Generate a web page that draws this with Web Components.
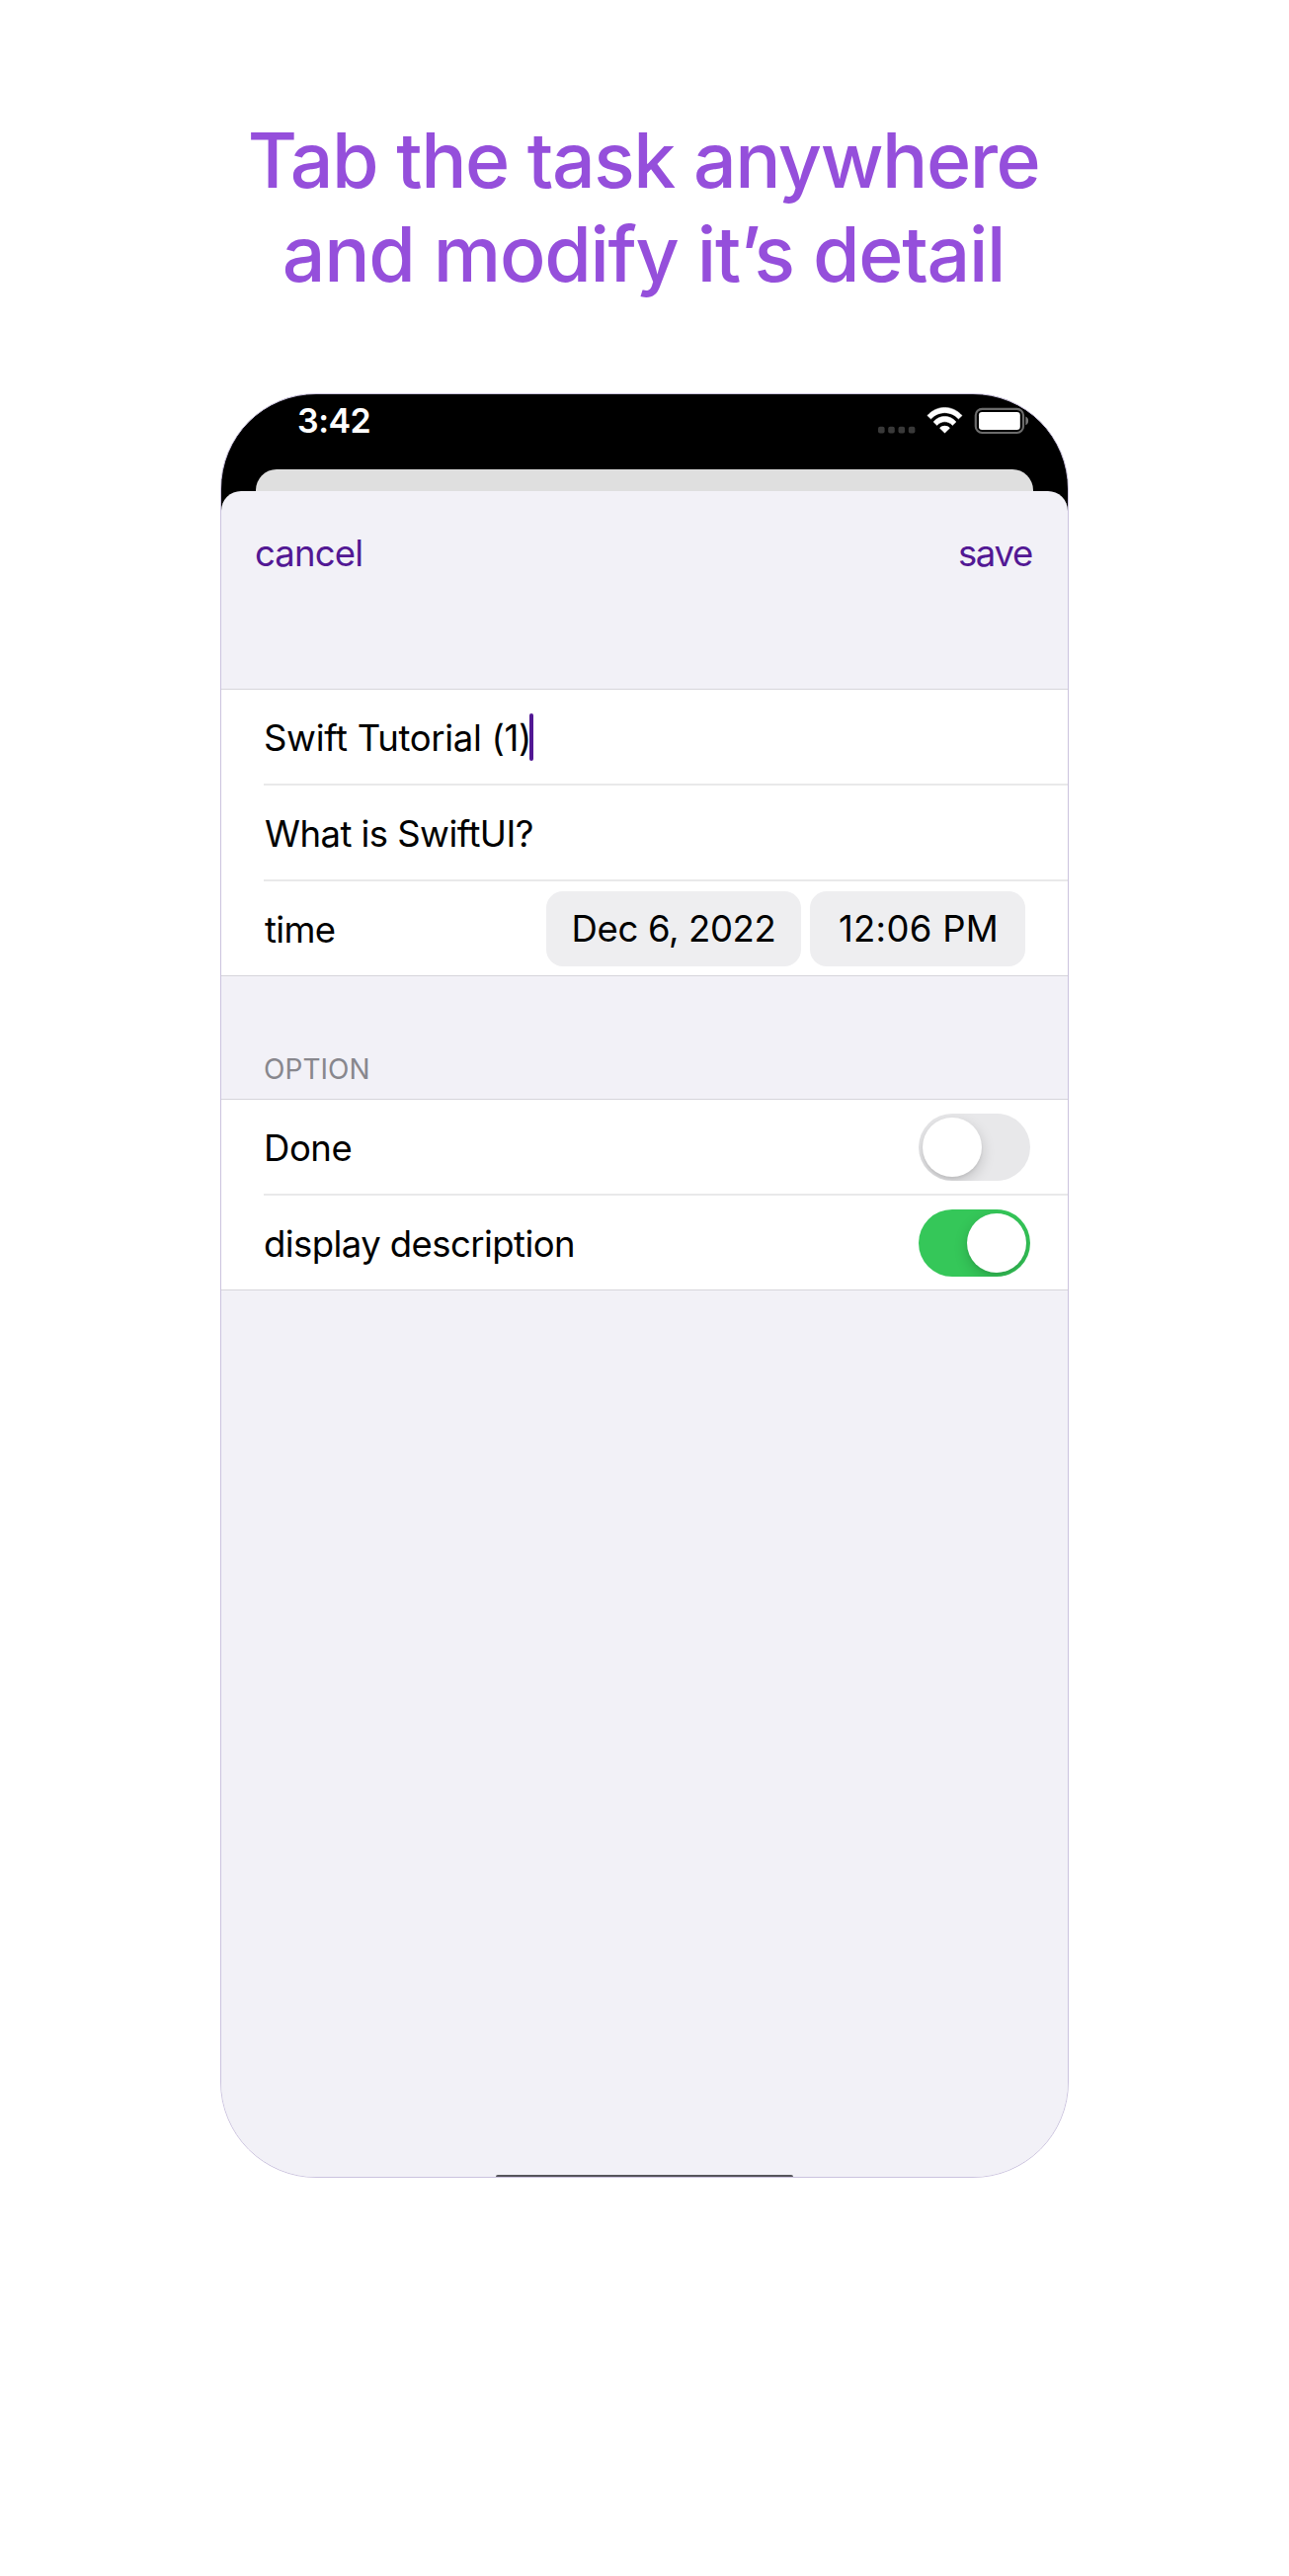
<!DOCTYPE html>
<html lang="en">
<head>
<meta charset="utf-8">
<title>Task detail</title>
<style>
html,body{margin:0;background:#fff}
body{font-family:Inter,"Noto Sans",sans-serif;color:#000;-webkit-font-smoothing:antialiased}
</style>
</head>
<body>
<promo-page>
  <promo-title slot="title"></promo-title>
  <phone-frame>
    <status-bar slot="status" time="3:42"></status-bar>
    <sheet-nav></sheet-nav>
    <form-section>
      <form-row ls="-0.319" left="0">Swift Tutorial (1)<text-caret slot="caret"></text-caret></form-row>
      <form-row ls="-0.55" left="1">What is SwiftUI?</form-row>
      <form-row ls="-0.7" left="1">time
        <date-chip slot="control" style="width:258px;letter-spacing:-.35px">Dec 6, 2022</date-chip>
        <date-chip slot="control" style="width:218px;letter-spacing:.3px;margin-left:9px;margin-right:43px;text-indent:2px">12:06 PM</date-chip>
      </form-row>
    </form-section>
    <section-label>OPTION</section-label>
    <form-section>
      <form-row ls="-0.431" left="0">Done<toggle-switch slot="control"></toggle-switch></form-row>
      <form-row ls="-0.572" left="0">display description<toggle-switch slot="control" on></toggle-switch></form-row>
    </form-section>
  </phone-frame>
</promo-page>
<script>
const define = (name, html, setup) => customElements.define(name, class extends HTMLElement {
  connectedCallback() {
    if (this.shadowRoot) return;
    const root = this.attachShadow({ mode: 'open' });
    root.innerHTML = html;
    if (setup) setup(this, root);
  }
});

define('promo-page', `<style>
:host{display:flex;flex-direction:column;align-items:center;box-sizing:border-box;width:1305px;height:2607px;padding-top:115px;background:#fff}
</style><slot name="title"></slot><slot></slot>`);

define('promo-title', `<style>
:host{display:block;height:283px;font-size:77px;font-weight:500;line-height:95px;color:#954fdb;text-align:center;white-space:nowrap}
div{padding-right:2px}
.a{letter-spacing:-1.455px}.b{letter-spacing:-1.28px}
</style><div class="a">Tab the task anywhere</div><div class="b">and modify it’s detail</div>`);

define('phone-frame', `<style>
:host{display:flex;flex-direction:column;box-sizing:border-box;width:859px;height:1806px;border:1px solid #cbc3de;border-radius:97px;overflow:hidden;background:linear-gradient(#000 0 140px,#f2f1f7 140px)}
.back{height:22px;margin:0 35px;background:#dfdfdf;border-radius:21px 21px 0 0}
.front{flex:1;display:flex;flex-direction:column;background:#f2f1f7;border-radius:20px 20px 0 0}
.home{margin:auto auto 0;width:301px;height:2px;background:#55555a;border-radius:2px 2px 0 0}
</style><slot name="status"></slot><div class="back"></div><div class="front"><slot></slot><div class="home"></div></div>`);

define('status-bar', `<style>
:host{display:flex;box-sizing:border-box;height:76px;padding:6px 39px 0 77px;color:#fff;align-items:flex-start}
span{font-size:34px;font-weight:600;line-height:42px;letter-spacing:-.5px;margin-right:auto}
svg{display:block}
</style><span></span>
<svg width="154" height="40" viewBox="888 405 154 40">
<g fill="#393939"><rect x="889" y="431.8" width="6.6" height="6.6" rx="2"/><rect x="899.2" y="431.8" width="6.6" height="6.6" rx="2"/><rect x="909.5" y="431.8" width="6.6" height="6.6" rx="2"/><rect x="919.8" y="431.8" width="6.6" height="6.6" rx="2"/></g>
<g fill="#fff"><path d="M938.9 420.6C948.6 409.7 964.2 409.7 974 420.6L970.4 423.9C962.8 415.6 950.2 415.6 942.5 423.9Z" stroke="#fff" stroke-width=".6" stroke-linejoin="round"/><path d="M945.1 426.9C951.4 419.6 961.6 419.6 967.9 426.9L964.3 430.4C960.3 425.6 952.7 425.6 948.7 430.4Z" stroke="#fff" stroke-width=".6" stroke-linejoin="round"/><path d="M951.2 433.2C954.2 430 958.8 430 961.8 433.2L956.5 438.5Z"/></g>
<rect x="987.8" y="413.8" width="48.2" height="24.2" rx="6.5" fill="none" stroke="#6b6b6b" stroke-width="2.2"/>
<rect x="991" y="417" width="41.8" height="18" rx="3.2" fill="#fff"/>
<path d="M1038.4 421.5C1042 423 1042 428.7 1038.4 430.2Z" fill="#777"/>
</svg>`, (el, root) => root.querySelector('span').textContent = el.getAttribute('time'));

define('sheet-nav', `<style>
:host{display:flex;justify-content:space-between;box-sizing:border-box;height:200px;padding:40px 36px 0 34px;font-size:36.5px;line-height:46px;color:#521894}
.c{letter-spacing:-.85px}.s{letter-spacing:-1.3px}
</style><span class="c">cancel</span><span class="s">save</span>`);

define('form-section', `<style>
:host{display:block;background:#fff;border-top:1px solid #d6d5db}
</style><slot></slot>`, el => el.lastElementChild.setAttribute('last', ''));

define('form-row', `<style>
:host{display:flex;height:97px;padding-left:43px;font-size:36.5px}
:host([last]){height:96px;padding-left:0;box-shadow:inset 0 -1px #d6d5db}
:host([last]) .row{height:96px;padding-left:43px;border:0}
.row{flex:1;display:flex;align-items:center;box-sizing:border-box;height:97px;border-bottom:2px solid #e9e9ea;line-height:46px}
.text{white-space:nowrap;margin-right:auto;padding-top:2px;display:flex;align-items:center}
</style><div class="row"><span class="text"><span class="t"><slot></slot></span><slot name="caret"></slot></span><slot name="control"></slot></div>`, (el, root) => {
  const t = root.querySelector('.t');
  t.style.letterSpacing = el.getAttribute('ls') + 'px';
  t.style.marginLeft = el.getAttribute('left') + 'px';
});

define('text-caret', `<style>
:host{display:block;width:4.5px;height:48px;border-radius:2px;background:#521894;margin:-2px 0 0 -2.5px}
</style>`);

define('date-chip', `<style>
:host{display:block;box-sizing:border-box;height:76px;line-height:77px;border-radius:17px;background:#eeeef0;text-align:center;white-space:nowrap}
</style><slot></slot>`);

define('section-label', `<style>
:host{display:block;box-sizing:border-box;height:124px;padding:74px 0 0 43px;font-size:28px;line-height:40px;letter-spacing:.05px;color:#88878d}
</style><slot></slot>`);

define('toggle-switch', `<style>
:host{display:flex;box-sizing:border-box;width:113px;height:68px;padding:4px;margin-right:38px;border-radius:34px;background:#e8e8ea;overflow:hidden}
:host([on]){background:#35c759;justify-content:flex-end}
i{width:60px;height:60px;border-radius:50%;background:#fff;box-shadow:0 5px 14px rgba(0,0,0,.17),0 2px 3px rgba(0,0,0,.06)}
</style><i></i>`);
</script>
</body>
</html>
